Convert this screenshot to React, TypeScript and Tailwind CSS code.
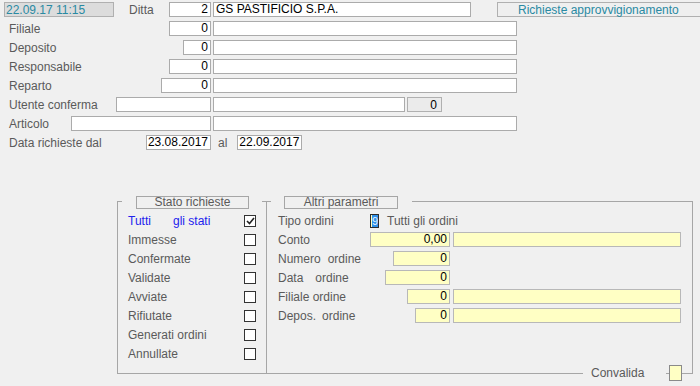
import React from "react";

const labelColor = "text-[#5a5a5a]";

const Box = ({ className = "", children }: { className?: string; children?: React.ReactNode }) => (
  <div
    className={`flex h-[15px] shrink-0 items-center overflow-hidden border border-[#ababab] bg-white px-[2px] leading-[13px] text-black ${className}`}
  >
    {children}
  </div>
);

const YBox = ({ className = "", children }: { className?: string; children?: React.ReactNode }) => (
  <div
    className={`flex h-[15px] shrink-0 items-center justify-end overflow-hidden border border-[#b8b8b8] bg-[#ffffc4] px-[2px] leading-[13px] text-black ${className}`}
  >
    {children}
  </div>
);

const Check = ({ checked = false }: { checked?: boolean }) => (
  <div className="flex h-[12px] w-[12px] items-center justify-center border border-[#333] bg-white">
    {checked && (
      <svg width="9" height="8" viewBox="0 0 9 8">
        <path d="M1 4 L3.5 6.5 L8 1" fill="none" stroke="#222" strokeWidth="1.6" />
      </svg>
    )}
  </div>
);

const TopRow = ({ label, left, right }: { label: string; left: React.ReactNode; right?: React.ReactNode }) => (
  <div className="flex h-[15px] items-center">
    <div className="flex w-[211px] shrink-0 items-center justify-between pl-[9px]">
      <span className={labelColor}>{label}</span>
      {left}
    </div>
    {right ?? <Box className="ml-[2px] w-[304px]" />}
  </div>
);

const stati = ["Immesse", "Confermate", "Validate", "Avviate", "Rifiutate", "Generati ordini", "Annullate"];

export default function App() {
  return (
    <div className="relative h-[386px] w-[700px] overflow-hidden bg-[#f0f0f0] font-['Liberation_Sans',Arial,sans-serif] text-[12px]">
      <div className="flex flex-col gap-[4px] pt-[2px]">
        {/* testata */}
        <div className="flex h-[15px] items-center">
          <div className="flex w-[211px] shrink-0 items-center">
            <div className="ml-[4px] flex h-[15px] w-[110px] shrink-0 items-center border border-[#b0b0b0] bg-[#dcdcdc] pl-[1px] text-[#2a8aa3]">
              22.09.17 11:15
            </div>
            <span className={`ml-[15px] ${labelColor}`}>Ditta</span>
            <Box className="ml-auto w-[42px] justify-end">2</Box>
          </div>
          <Box className="ml-[2px] w-[258px]">GS PASTIFICIO S.P.A.</Box>
          <div className="ml-[26px] flex h-[15px] w-[210px] shrink-0 items-center border border-[#b0b0b0] bg-[#efefef] pl-[20px] text-[#2a8aa3]">
            Richieste approvvigionamento
          </div>
        </div>
        <TopRow label="Filiale" left={<Box className="w-[42px] justify-end">0</Box>} />
        <TopRow label="Deposito" left={<Box className="w-[28px] justify-end">0</Box>} />
        <TopRow label="Responsabile" left={<Box className="w-[42px] justify-end">0</Box>} />
        <TopRow label="Reparto" left={<Box className="w-[50px] justify-end">0</Box>} />
        <TopRow
          label="Utente conferma"
          left={<Box className="w-[95px]" />}
          right={
            <>
              <Box className="ml-[2px] w-[192px]" />
              <div className="ml-[2px] flex h-[15px] w-[35px] items-center justify-end border border-[#b0b0b0] bg-[#ebebeb] px-[4px] text-black">
                0
              </div>
            </>
          }
        />
        <TopRow label="Articolo" left={<Box className="w-[140px]" />} />
        <div className="flex h-[15px] items-center">
          <div className="flex w-[211px] shrink-0 items-center justify-between pl-[9px]">
            <span className={labelColor}>Data richieste dal</span>
            <Box className="w-[65px] justify-end border-[#7a7a7a]">23.08.2017</Box>
          </div>
          <span className={`ml-[7px] ${labelColor}`}>al</span>
          <Box className="ml-[10px] w-[65px] justify-end border-[#7a7a7a]">22.09.2017</Box>
        </div>
      </div>

      {/* riquadro filtri */}
      <div className="relative ml-[117px] mt-[51px] flex h-[173px] w-[576px] border-x border-b border-[#a6a6a6]">
        <div className="absolute left-[-1px] top-0 h-px w-[5px] bg-[#a6a6a6]" />
        <div className="absolute left-[144px] top-0 h-px w-[9px] bg-[#a6a6a6]" />
        <div className="absolute left-[294px] right-[-1px] top-0 h-px bg-[#a6a6a6]" />

        <div className={`absolute left-[18px] top-[-5px] flex h-[13px] w-[113px] items-center justify-center border border-[#a6a6a6] bg-[#f0f0f0] leading-[11px] ${labelColor}`}>
          Stato richieste
        </div>
        <div className={`absolute left-[166px] top-[-5px] flex h-[13px] w-[114px] items-center justify-center border border-[#a6a6a6] bg-[#f0f0f0] leading-[11px] ${labelColor}`}>
          Altri parametri
        </div>

        <div className="flex w-[148px] flex-col pl-[10px] pr-[10px] pt-[10px]">
          <div className="flex h-[19px] items-center justify-between">
            <span className="flex text-[#2222ee]">
              <span className="w-[45px]">Tutti</span>
              <span>gli stati</span>
            </span>
            <Check checked />
          </div>
          {stati.map((s) => (
            <div key={s} className="flex h-[19px] items-center justify-between">
              <span className={labelColor}>{s}</span>
              <Check />
            </div>
          ))}
        </div>

        <div className="flex flex-1 flex-col border-l border-[#a6a6a6] pl-[11px] pt-[10px]">
          <div className="flex h-[19px] items-center">
            <span className={`w-[92px] ${labelColor}`}>Tipo ordini</span>
            <div className="flex h-[14px] w-[9px] items-stretch overflow-hidden border border-[#2b2b2b] bg-[#ffffc4] pl-[1px]">
              <span className="bg-[#2f8fe8] text-[11px] leading-[12px] text-[#e8f4ff]">9</span>
            </div>
            <span className={`ml-[8px] ${labelColor}`}>Tutti gli ordini</span>
          </div>
          <div className="flex h-[19px] items-center">
            <span className={`w-[92px] ${labelColor}`}>Conto</span>
            <div className="flex w-[80px] justify-end">
              <YBox className="w-[80px]">0,00</YBox>
            </div>
            <YBox className="ml-[3px] w-[228px]" />
          </div>
          <div className="flex h-[19px] items-center">
            <span className={`flex w-[92px] ${labelColor}`}>
              Numero<span className="ml-[7px]">ordine</span>
            </span>
            <div className="flex w-[80px] justify-end">
              <YBox className="w-[57px]">0</YBox>
            </div>
          </div>
          <div className="flex h-[19px] items-center">
            <span className={`flex w-[92px] ${labelColor}`}>
              Data<span className="ml-[12px]">ordine</span>
            </span>
            <div className="flex w-[80px] justify-end">
              <YBox className="w-[65px]">0</YBox>
            </div>
          </div>
          <div className="flex h-[19px] items-center">
            <span className={`w-[92px] ${labelColor}`}>Filiale ordine</span>
            <div className="flex w-[80px] justify-end">
              <YBox className="w-[43px]">0</YBox>
            </div>
            <YBox className="ml-[3px] w-[228px]" />
          </div>
          <div className="flex h-[19px] items-center">
            <span className={`flex w-[92px] ${labelColor}`}>
              Depos.<span className="ml-[6px]">ordine</span>
            </span>
            <div className="flex w-[80px] justify-end">
              <YBox className="w-[35px]">0</YBox>
            </div>
            <YBox className="ml-[3px] w-[228px]" />
          </div>
        </div>

        <div className="absolute bottom-[-8px] left-[465px] flex h-[16px] items-center">
          <span className={`flex h-[16px] w-[83px] items-center bg-[#f0f0f0] pl-[8px] ${labelColor}`}>Convalida</span>
          <div className="ml-[3px] h-[16px] w-[13px] border border-[#8a8a8a] bg-[#ffffc4]" />
        </div>
      </div>
    </div>
  );
}
